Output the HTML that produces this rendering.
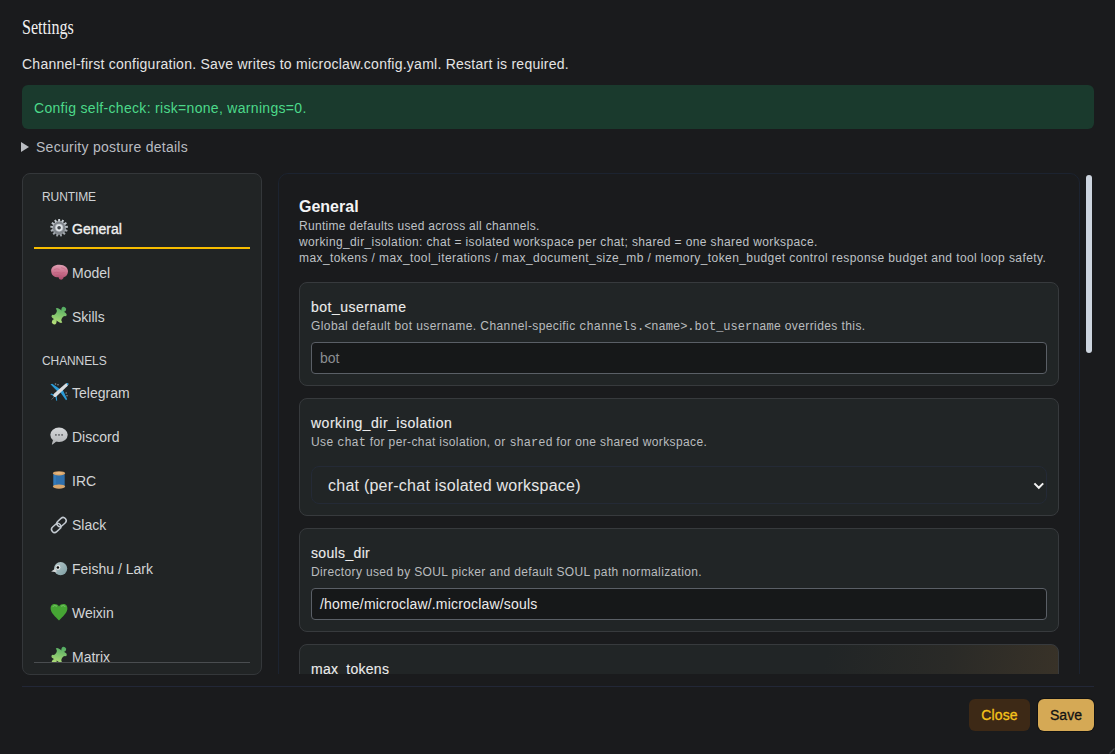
<!DOCTYPE html>
<html><head><meta charset="utf-8">
<style>
*{box-sizing:border-box;margin:0;padding:0}
html,body{width:1115px;height:754px;overflow:hidden;background:#1a1b1d;font-family:"Liberation Sans",sans-serif;color:#e6e6e6}
.abs{position:absolute}
#title{left:22px;top:14px;transform:scaleX(0.73);font-family:"Liberation Serif",serif;font-size:22px;color:#f0f0f0;transform-origin:0 0;white-space:nowrap}
#sub{left:22px;top:55px;letter-spacing:0.25px;font-size:14px;line-height:18px;color:#e4e4e4;white-space:nowrap}
#alert{left:22px;top:85px;width:1072px;height:44px;border-radius:6px;background:#1a3a2d;color:#4cd98a;font-size:14px;line-height:46px;letter-spacing:0.31px;padding-left:12px;white-space:nowrap}
#sec{left:21px;top:138px;letter-spacing:0.27px;font-size:14px;line-height:18px;color:#b9bcc1;white-space:nowrap}
#sec .tri{display:inline-block;width:0;height:0;border-left:8px solid #b9bcc1;border-top:5px solid transparent;border-bottom:5px solid transparent;margin-right:7px;vertical-align:0px}
#side{left:22px;top:173px;width:240px;height:502px;border:1px solid #34373a;border-radius:8px;background:#212425;overflow:hidden}
.grp{position:absolute;left:19px;font-size:12px;color:#cfd2d5;letter-spacing:-0.1px}
.item{position:absolute;left:11px;width:216px;height:44px;font-size:14px;color:#d2d4d6;white-space:nowrap}
.item .ic{position:absolute;left:12px;top:8px;width:26px;height:26px}
.item .tx{position:absolute;left:38px;top:12px;line-height:18px}
.item.act{color:#f0f0f0;-webkit-text-stroke:0.35px #f0f0f0}
#sidefoot{position:absolute;left:11px;top:488px;width:216px;height:1px;background:#4a4d50}
#main{width:802px;height:530px;border:1px solid #1c2330;border-radius:10px;background:#1a1b1d}
#clipmain{left:0;top:674px;width:1115px;height:80px;background:#1b1c1e}
#scroll{left:1086px;top:175px;width:6px;height:178px;border-radius:3px;background:#cdd5df}
#foot{left:22px;top:686px;width:1072px;height:1px;background:#222737}
.btn{position:absolute;top:699px;height:32px;border-radius:6px;font-size:14px;line-height:32px;text-align:center;white-space:nowrap;-webkit-text-stroke:0.3px currentColor}
#close{left:969px;width:61px;letter-spacing:0.1px;background:#3d2916;color:#f5c21b}
#save{left:1038px;width:56px;background:#d5a955;color:#111214;box-shadow:0 0 0 1px rgba(0,0,0,0.35)}
h2{position:absolute;left:20px;top:24px;font-size:16px;font-weight:bold;color:#f4f4f4}
.desc{position:absolute;left:20px;font-size:12px;line-height:16px;color:#bfc2c6;white-space:nowrap}
.card{position:absolute;left:20px;width:760px;border:1px solid #373a3d;border-radius:8px;background:#212526}
.card .lab{position:absolute;left:11px;top:14px;font-size:14px;line-height:20px;color:#ececec;-webkit-text-stroke:0.12px #ececec;white-space:nowrap}
.card .d{position:absolute;left:11px;top:35px;font-size:12px;line-height:16px;color:#b9bcbf;white-space:nowrap}
.mono{font-family:"Liberation Mono",monospace;letter-spacing:0}
.inp{position:absolute;left:11px;width:736px;height:32px;border:1px solid #5a5f66;border-radius:4px;background:#161819;font-size:14px;line-height:30px;padding-left:8px;white-space:nowrap}
.sel{position:absolute;left:11px;width:736px;height:38px;border:1px solid #242a36;border-radius:8px;background:#212526;font-size:16px;line-height:37px;padding-left:16px;color:#e6e6e6;white-space:nowrap}
</style></head><body>
<div id="title" class="abs">Settings</div>
<div id="sub" class="abs">Channel-first configuration. Save writes to microclaw.config.yaml. Restart is required.</div>
<div id="alert" class="abs"><span id="alerttx">Config self-check: risk=none, warnings=0.</span></div>
<div id="sec" class="abs"><span class="tri"></span><span id="sectx">Security posture details</span></div>

<svg width="0" height="0" style="position:absolute"><defs>
<linearGradient id="gGear" x1="0" y1="0" x2="0" y2="1"><stop offset="0" stop-color="#cdd3d9"/><stop offset="1" stop-color="#969ca2"/></linearGradient>
<linearGradient id="gBrain" x1="0" y1="0" x2="0" y2="1"><stop offset="0" stop-color="#dfa0b3"/><stop offset="0.5" stop-color="#cc728e"/><stop offset="1" stop-color="#ab4b6c"/></linearGradient>
<linearGradient id="gPuz" gradientUnits="userSpaceOnUse" x1="-3" y1="-9" x2="3" y2="9"><stop offset="0" stop-color="#4fab62"/><stop offset="1" stop-color="#b8e07a"/></linearGradient>
<linearGradient id="gBub" x1="0" y1="0" x2="0" y2="1"><stop offset="0" stop-color="#d4d6d8"/><stop offset="1" stop-color="#b9bbbd"/></linearGradient>
<linearGradient id="gBird" x1="0" y1="0" x2="1" y2="1"><stop offset="0" stop-color="#b6c8cb"/><stop offset="1" stop-color="#7e9ea3"/></linearGradient>
</defs></svg>
<div id="side" class="abs"><div id="nav" style="position:absolute;left:0;top:0;width:238px;height:488px;overflow:hidden">
  <div class="grp" style="top:16px">RUNTIME</div>
  <div class="item act" style="top:31px;border-bottom:2px solid #f7bd00"><svg class="ic" style="top:9px" viewBox="0 0 26 26"><path d="M12.05,7.18 L12.22,4.94 L14.07,4.95 L14.21,7.19 L15.25,7.45 L16.44,5.55 L18.07,6.41 L17.16,8.47 L17.95,9.18 L19.89,8.04 L20.93,9.57 L19.17,10.96 L19.54,11.96 L21.79,11.86 L22.00,13.69 L19.79,14.11 L19.66,15.17 L21.69,16.12 L21.03,17.84 L18.88,17.18 L18.27,18.06 L19.63,19.85 L18.24,21.06 L16.65,19.48 L15.70,19.97 L16.07,22.19 L14.28,22.62 L13.60,20.48 L12.53,20.48 L11.84,22.61 L10.04,22.16 L10.44,19.95 L9.50,19.45 L7.89,21.01 L6.51,19.78 L7.89,18.01 L7.28,17.13 L5.13,17.76 L4.48,16.03 L6.53,15.10 L6.40,14.04 L4.20,13.61 L4.43,11.77 L6.68,11.90 L7.06,10.90 L5.31,9.49 L6.37,7.98 L8.29,9.13 L9.10,8.43 L8.20,6.37 L9.84,5.52 L11.01,7.43Z" fill="url(#gGear)"/><circle cx="13.1" cy="13.8" r="5.2" fill="none" stroke="#80858b" stroke-width="2.2"/><circle cx="13.1" cy="13.8" r="3.4" fill="#dfe3e7"/><circle cx="13.1" cy="13.8" r="1.8" fill="#40454a"/></svg><span class="tx" style="top:15px">General</span></div>
  <div class="item" style="top:78px"><svg class="ic" viewBox="0 0 26 26"><path d="M5.2,11.5 C4.6,7.5 8.5,4.8 13,4.8 C18.5,4.6 22.2,7.8 22,11.8 C21.8,15.3 19.4,17 17.6,17.2 C17.4,19.2 15.8,19.9 14.4,19.6 C13.2,19.3 12.8,18.3 12.6,17.3 C10.5,17.4 8.6,16.9 7.3,15.8 C6,14.8 5.4,13.3 5.2,11.5Z" fill="url(#gBrain)"/><path d="M8,9.5 Q11,8.2 13.5,9.4 M15,7.6 Q17.5,8 19.5,9.6 M7.5,13 Q10.5,11.6 13,12.8 Q15.5,13.8 18.5,12.5 M10,15.5 Q12.5,14.6 15.5,15.6" stroke="#b95a78" stroke-width="0.7" fill="none" opacity="0.7"/></svg><span class="tx">Model</span></div>
  <div class="item" style="top:122px"><svg class="ic" viewBox="0 0 26 26"><g transform="translate(13.1 11.5) rotate(31)"><rect x="-6.4" y="-5.7" width="12.8" height="11.4" rx="2.4" fill="url(#gPuz)"/><circle cx="0.8" cy="-7.7" r="2.4" fill="url(#gPuz)"/><rect x="-0.5" y="-6.5" width="2.6" height="2" fill="url(#gPuz)"/><circle cx="-0.9" cy="8.0" r="2.4" fill="url(#gPuz)"/><rect x="-2.2" y="4.5" width="2.6" height="2" fill="url(#gPuz)"/><circle cx="-7.5" cy="-0.6" r="3.7" fill="#212425"/><circle cx="7.5" cy="0.6" r="3.7" fill="#212425"/></g></svg><span class="tx">Skills</span></div>
  <div class="grp" style="top:180px">CHANNELS</div>
  <div class="item" style="top:198px"><svg class="ic" viewBox="0 0 26 26"><path d="M4.5,4.2 L6.2,3.8 L14.2,9.2 L11.8,11.8Z" fill="#2a9bd8"/><path d="M13.8,11.5 L16.5,9.2 L21.2,19.2 L20,20.2Z" fill="#2a9bd8"/><path d="M4.2,14.2 L5.3,13.6 L9.6,15.2 L8.6,16.6Z" fill="#2a9bd8"/><path d="M9.2,15.8 L10.6,15 L11.2,20.4 L10.2,20.8Z" fill="#2a9bd8"/><path d="M7.6,16.6 C6.8,15.6 7.4,14.2 8.4,13.2 L19.4,3.8 C20.6,2.8 21.8,2.8 22.2,3.4 C22.6,4 22.2,5.2 21.2,6.2 L10.6,16.2 C9.6,17.1 8.4,17.4 7.6,16.6Z" fill="#d9dcdf"/><path d="M20.4,3.3 C21.4,2.8 22,3 22.2,3.4 C22.5,3.9 22.2,4.7 21.6,5.4Z" fill="#2a9bd8"/><path d="M5.5,19.5 L8,17.2" stroke="#6b6f73" stroke-width="0.8"/><circle cx="9.5" cy="4" r="0.8" fill="#8a8f93"/><circle cx="12" cy="4.8" r="0.8" fill="#8a8f93"/><circle cx="20.2" cy="13" r="0.8" fill="#8a8f93"/><circle cx="21" cy="15.8" r="0.8" fill="#8a8f93"/></svg><span class="tx">Telegram</span></div>
  <div class="item" style="top:242px"><svg class="ic" viewBox="0 0 26 26"><ellipse cx="13" cy="10.8" rx="8.7" ry="7.2" fill="url(#gBub)"/><path d="M7.2,15.2 L5.8,20.6 Q6.5,20.8 10.5,17.2Z" fill="#b4b6b8"/><rect x="9.1" y="10" width="1.6" height="1.8" fill="#6b6d70"/><rect x="12.2" y="10" width="1.6" height="1.8" fill="#6b6d70"/><rect x="15.3" y="10" width="1.6" height="1.8" fill="#6b6d70"/></svg><span class="tx">Discord</span></div>
  <div class="item" style="top:286px"><svg class="ic" viewBox="0 0 26 26"><rect x="7.4" y="6.2" width="11.3" height="11.6" fill="#2f6fab"/><rect x="7.4" y="6.2" width="2.5" height="11.6" fill="#3a82c0" opacity="0.6"/><ellipse cx="13" cy="5.3" rx="6.2" ry="2.1" fill="#d9a66c"/><ellipse cx="13" cy="18.6" rx="6.2" ry="2.1" fill="#d9a66c"/><ellipse cx="13" cy="5" rx="3.5" ry="1" fill="#e8bc85" opacity="0.8"/></svg><span class="tx">IRC</span></div>
  <div class="item" style="top:330px"><svg class="ic" viewBox="0 0 26 26"><g transform="rotate(-42 13 13)" fill="none" stroke="#c3cad1" stroke-width="1.5"><rect x="3.8" y="10.2" width="10.4" height="6.2" rx="3.1"/><rect x="11.6" y="9.4" width="10.4" height="6.2" rx="3.1"/></g></svg><span class="tx">Slack</span></div>
  <div class="item" style="top:374px"><svg class="ic" viewBox="0 0 26 26"><circle cx="14.6" cy="12.6" r="6.6" fill="url(#gBird)"/><path d="M5.2,15.6 L9.8,12.2 L10.6,16.2Z" fill="#d3d5d6"/><circle cx="12" cy="11.5" r="2.4" fill="#e4e8e8"/><circle cx="11.9" cy="11.5" r="1.3" fill="#0c0c0c"/></svg><span class="tx">Feishu / Lark</span></div>
  <div class="item" style="top:418px"><svg class="ic" viewBox="0 0 26 26"><path d="M13,6.4 C11.8,4.2 9.4,3.6 7.6,4 C5.2,4.6 4.2,6.8 4.7,9.6 C5.3,13.2 9,16.6 13,20.6 C17,16.6 20.7,13.2 21.3,9.6 C21.8,6.8 20.8,4.6 18.4,4 C16.6,3.6 14.2,4.2 13,6.4Z" fill="#46a534"/><path d="M6.6,6.6 Q8.6,4.8 11,6.2" stroke="#8fd080" stroke-width="1" fill="none" opacity="0.7"/><path d="M15,6.2 Q17.4,4.8 19.4,6.6" stroke="#8fd080" stroke-width="1" fill="none" opacity="0.7"/></svg><span class="tx">Weixin</span></div>
  <div class="item" style="top:462px"><svg class="ic" viewBox="0 0 26 26"><g transform="translate(13.1 11.5) rotate(31)"><rect x="-6.4" y="-5.7" width="12.8" height="11.4" rx="2.4" fill="url(#gPuz)"/><circle cx="0.8" cy="-7.7" r="2.4" fill="url(#gPuz)"/><rect x="-0.5" y="-6.5" width="2.6" height="2" fill="url(#gPuz)"/><circle cx="-0.9" cy="8.0" r="2.4" fill="url(#gPuz)"/><rect x="-2.2" y="4.5" width="2.6" height="2" fill="url(#gPuz)"/><circle cx="-7.5" cy="-0.6" r="3.7" fill="#212425"/><circle cx="7.5" cy="0.6" r="3.7" fill="#212425"/></g></svg><span class="tx">Matrix</span></div>
  </div><div id="sidefoot"></div>
</div>

<div id="mainwrap" class="abs" style="left:278px;top:173px;width:815px;height:501px;overflow:hidden"><div id="main" style="position:absolute;left:0;top:0">
  <h2 id="h2">General</h2>
  <div id="desc1" class="desc" style="letter-spacing:0.3px;top:44px">Runtime defaults used across all channels.</div>
  <div id="desc2" class="desc" style="letter-spacing:0.38px;top:60px">working_dir_isolation: chat = isolated workspace per chat; shared = one shared workspace.</div>
  <div id="desc3" class="desc" style="letter-spacing:0.41px;top:76px">max_tokens / max_tool_iterations / max_document_size_mb / memory_token_budget control response budget and tool loop safety.</div>

  <div class="card" style="top:108px;height:104px">
    <div id="lab1" class="lab" style="letter-spacing:0.5px">bot_username</div>
    <div id="d1" class="d" style="letter-spacing:0.41px">Global default bot username. Channel-specific <span class="mono">channels.&lt;name&gt;.bot_username</span> overrides this.</div>
    <div id="inp1" class="inp" style="top:59px;color:#8b8e91"><span id="inp1t">bot</span></div>
  </div>
  <div class="card" style="top:224px;height:118px">
    <div id="lab2" class="lab" style="letter-spacing:0.5px">working_dir_isolation</div>
    <div id="d2" class="d" style="letter-spacing:0.38px">Use <span class="mono">chat</span> for per-chat isolation, or <span class="mono">shared</span> for one shared workspace.</div>
    <div id="sel" class="sel" style="top:67px;letter-spacing:0.24px">chat (per-chat isolated workspace)<svg style="position:absolute;left:720px;top:14px" width="14" height="10" viewBox="0 0 14 10"><path d="M2.4,2.4 L6.8,6.8 L11.2,2.4" fill="none" stroke="#f2f2f2" stroke-width="2"/></svg></div>
  </div>
  <div class="card" style="top:354px;height:104px">
    <div id="lab3" class="lab" style="letter-spacing:0.34px">souls_dir</div>
    <div id="d3" class="d" style="letter-spacing:0.36px">Directory used by SOUL picker and default SOUL path normalization.</div>
    <div id="inp3" class="inp" style="top:59px;color:#ececec;letter-spacing:0.18px"><span id="inp3t">/home/microclaw/.microclaw/souls</span></div>
  </div>
  <div class="card" style="top:470px;height:104px;background:linear-gradient(100deg,#212526 0%,#212526 68%,#2a2a27 84%,#3a3328 100%)">
    <div id="lab4" class="lab" style="letter-spacing:0.27px">max_tokens</div>
  </div>
</div>
</div>
<div id="scroll" class="abs"></div>
<div id="foot" class="abs"></div>
<div id="close" class="btn"><span id="closet">Close</span></div>
<div id="save" class="btn"><span id="savet">Save</span></div>
<svg class="abs" style="left:1103px;top:742px" width="12" height="12" viewBox="0 0 12 12"><path d="M11.5,6.5 L6.5,11.5" stroke="#3d4044" stroke-width="1.2"/></svg>
</body></html>
